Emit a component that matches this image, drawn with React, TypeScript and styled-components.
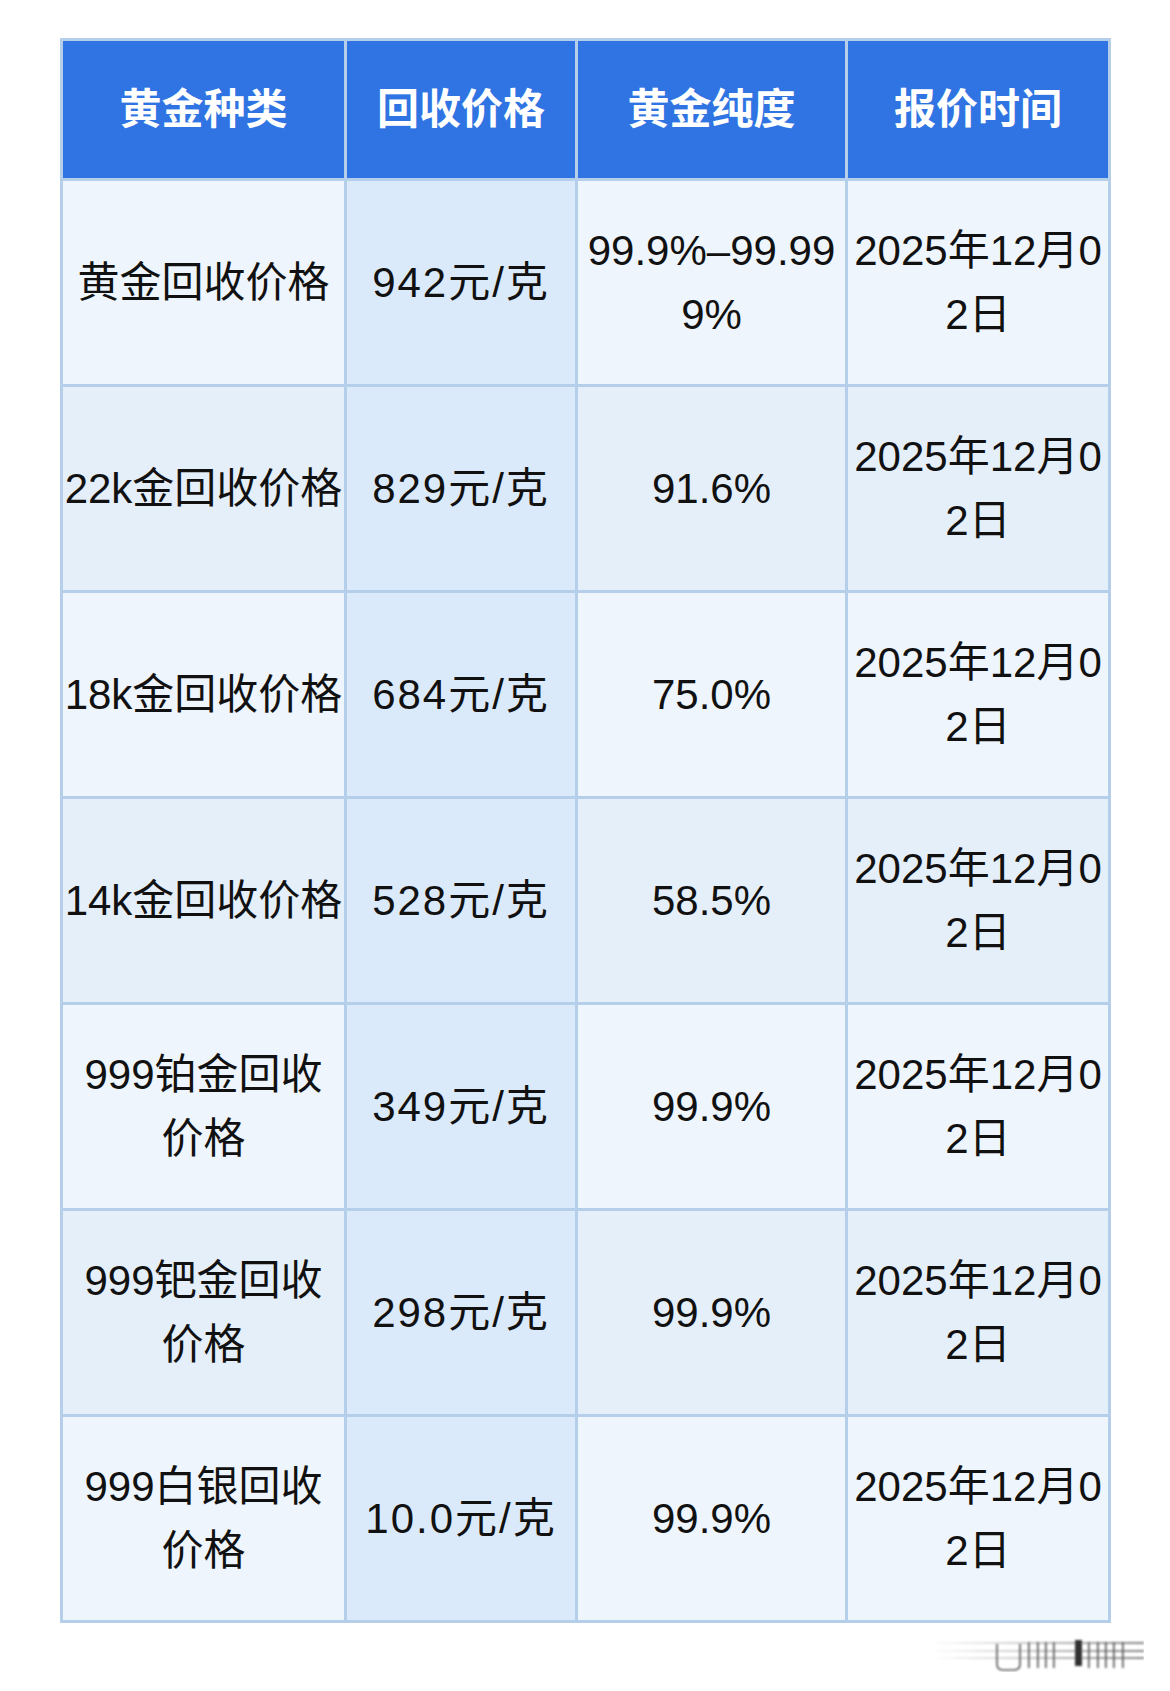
import React from 'react';
import styled, { createGlobalStyle } from 'styled-components';

const GlobalStyle = createGlobalStyle`
  html, body {
    margin: 0;
    padding: 0;
    background: #ffffff;
  }
  body {
    font-family: "Liberation Sans", "Noto Sans CJK SC", sans-serif;
    color: #111111;
  }
`;

const border = '#b5cfea';

const Page = styled.div`
  width: 1170px;
  padding: 38px 0 0 60px;
  box-sizing: border-box;
`;

const Table = styled.table`
  width: 1048px;
  table-layout: fixed;
  border-collapse: collapse;
  border: 3px solid ${border};
`;

const HeadCell = styled.th`
  padding: 36.5px 0;
  background: #2f74e2;
  color: #ffffff;
  font-size: 42px;
  font-weight: 700;
  line-height: 64px;
  text-align: center;
  border: 3px solid ${border};
`;

const Row = styled.tr<{ $even: boolean }>`
  background: ${(p) => (p.$even ? '#e5eff9' : '#eef5fc')};
`;

const Cell = styled.td<{ $highlight?: boolean }>`
  padding: 37.5px 0;
  font-size: 42px;
  line-height: 64px;
  letter-spacing: ${(p) => (p.$highlight ? '2px' : '0')};
  text-align: center;
  vertical-align: middle;
  white-space: pre-line;
  border: 3px solid ${border};
  background: ${(p) => (p.$highlight ? '#dbeafa' : 'transparent')};
`;

const Footer = styled.div`
  display: flex;
  justify-content: flex-end;
  padding: 13px 26px 0 0;
`;

const rows = [
  { name: '黄金回收价格', price: '942元/克', purity: '99.9%–99.99\n9%' },
  { name: '22k金回收价格', price: '829元/克', purity: '91.6%' },
  { name: '18k金回收价格', price: '684元/克', purity: '75.0%' },
  { name: '14k金回收价格', price: '528元/克', purity: '58.5%' },
  { name: '999铂金回收\n价格', price: '349元/克', purity: '99.9%' },
  { name: '999钯金回收\n价格', price: '298元/克', purity: '99.9%' },
  { name: '999白银回收\n价格', price: '10.0元/克', purity: '99.9%' },
];

const quoteDate = '2025年12月0\n2日';

const Watermark = () => (
  <svg width="214" height="36" viewBox="0 0 214 36">
    <defs>
      <filter id="soft" x="-10%" y="-50%" width="120%" height="200%">
        <feGaussianBlur stdDeviation="0.8" />
      </filter>
      <linearGradient id="fade" x1="0" x2="1" y1="0" y2="0">
        <stop offset="0" stopColor="#999" stopOpacity="0" />
        <stop offset="0.5" stopColor="#888" stopOpacity="0.5" />
        <stop offset="1" stopColor="#666" stopOpacity="0.8" />
      </linearGradient>
    </defs>
    <g filter="url(#soft)">
      <rect x="0" y="6" width="214" height="2" fill="url(#fade)" />
      <rect x="0" y="14" width="214" height="2" fill="url(#fade)" />
      <rect x="0" y="21" width="214" height="2" fill="url(#fade)" />
      <path d="M67 8 V28 Q67 34 73 34 H84 Q90 34 90 28 V8" fill="none" stroke="#555" strokeWidth="1.6" />
      {[98, 107, 115, 123].map((x) => (
        <rect key={x} x={x} y="6" width="1.6" height="26" fill="#555" />
      ))}
      <rect x="145" y="4" width="7" height="26" fill="#333" />
      {[158, 167, 175, 183, 192].map((x) => (
        <rect key={x} x={x} y="6" width="1.6" height="26" fill="#555" />
      ))}
    </g>
  </svg>
);

const App = (): React.ReactElement => {
  return (
    <>
      <GlobalStyle />
      <Page>
        <Table>
          <colgroup>
            <col style={{ width: 284 }} />
            <col style={{ width: 231 }} />
            <col style={{ width: 270 }} />
            <col style={{ width: 263 }} />
          </colgroup>
          <thead>
            <tr>
              <HeadCell>黄金种类</HeadCell>
              <HeadCell>回收价格</HeadCell>
              <HeadCell>黄金纯度</HeadCell>
              <HeadCell>报价时间</HeadCell>
            </tr>
          </thead>
          <tbody>
            {rows.map((row, i) => (
              <Row key={row.name} $even={i % 2 === 1}>
                <Cell>{row.name}</Cell>
                <Cell $highlight>{row.price}</Cell>
                <Cell>{row.purity}</Cell>
                <Cell>{quoteDate}</Cell>
              </Row>
            ))}
          </tbody>
        </Table>
        <Footer>
          <Watermark />
        </Footer>
      </Page>
    </>
  );
};

export default App;
